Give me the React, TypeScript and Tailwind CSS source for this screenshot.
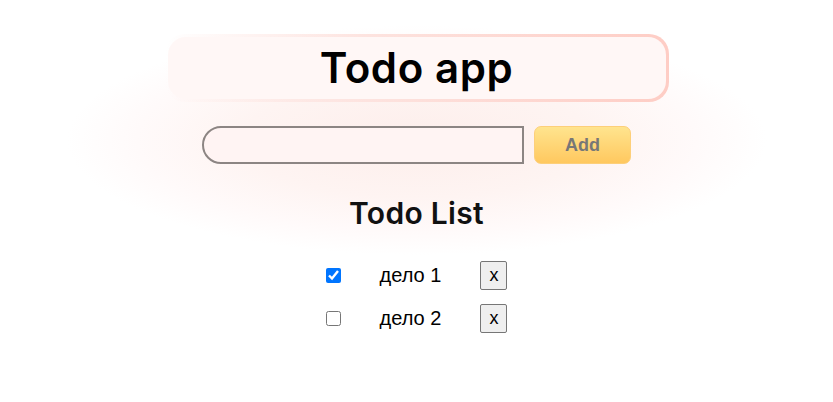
import React, { useState } from "react";

type Todo = { id: number; text: string; done: boolean };

const App = () => {
  const [todos, setTodos] = useState<Todo[]>([
    { id: 1, text: "дело 1", done: true },
    { id: 2, text: "дело 2", done: false },
  ]);
  const [value, setValue] = useState("");

  const add = () => {
    if (!value.trim()) return;
    setTodos([...todos, { id: Date.now(), text: value, done: false }]);
    setValue("");
  };

  return (
    <div className="min-h-screen bg-white flex flex-col items-center font-['Liberation_Sans',Arial,sans-serif]">
      {/* Glow + header */}
      <section className="w-[700px] pt-[34px] pb-[24px] flex flex-col items-center bg-[radial-gradient(ellipse_closest-side_at_50%_55%,#fdeeeb_0%,#fef4f2_50%,#fffafa_80%,#ffffff_100%)]">
        <div className="w-[504px] h-[68px] rounded-[20px] p-[3px] bg-[linear-gradient(90deg,rgba(254,205,197,0)_0%,#fde3df_40%,#fecdc5_100%)]">
          <div className="h-full rounded-[18px] bg-[#fff7f6] flex items-center justify-center">
            <h1 className="font-['Inter',sans-serif] font-semibold text-[42px] leading-none text-black tracking-[0.6px]">
              Todo app
            </h1>
          </div>
        </div>

        {/* Input row */}
        <div className="mt-[24px] flex items-center gap-[10px]">
          <input
            value={value}
            onChange={(e) => setValue(e.target.value)}
            className="w-[322px] h-[38px] rounded-l-[20px] border-2 border-[#8c8583] bg-[#fff4f3] px-3 outline-none"
          />
          <button
            onClick={add}
            className="w-[97px] h-[38px] rounded-[7px] border border-[#fdcf7a] bg-[linear-gradient(180deg,#ffe48e_0%,#ffc85f_100%)] text-[#777] font-bold text-[18px]"
          >
            Add
          </button>
        </div>

        {/* List title */}
        <h2 className="mt-[31px] font-['Inter',sans-serif] font-semibold text-[30px] leading-[36px] text-[#111] tracking-[0.3px]">
          Todo List
        </h2>
      </section>

      {/* Items */}
      <ul className="mt-[6px] flex flex-col items-center gap-[14px]">
        {todos.map((t) => (
          <li key={t.id} className="flex items-center gap-[39px]">
            <input
              type="checkbox"
              checked={t.done}
              onChange={() =>
                setTodos(todos.map((x) => (x.id === t.id ? { ...x, done: !x.done } : x)))
              }
              className="w-[15px] h-[15px] accent-[#0075ff]"
            />
            <span className="text-[20px] text-black leading-[29px]">{t.text}</span>
            <button
              onClick={() => setTodos(todos.filter((x) => x.id !== t.id))}
              className="w-[27px] h-[29px] bg-[#efefef] border border-[#767676] rounded-[2px] text-[18px] text-black"
            >
              x
            </button>
          </li>
        ))}
      </ul>
    </div>
  );
};

export default App;
